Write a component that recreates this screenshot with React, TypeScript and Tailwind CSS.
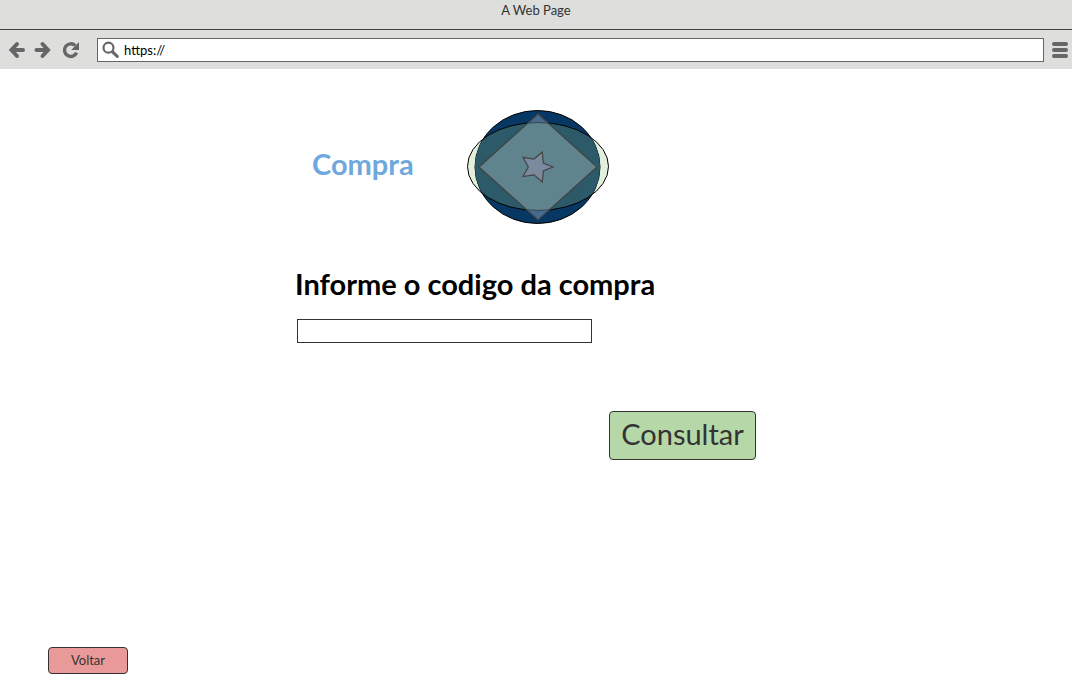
import React from "react";

function BackIcon() {
  return (
    <svg width="18" height="18" viewBox="0 0 18 18" fill="none" stroke="#666666" strokeWidth="4" aria-hidden="true">
      <path d="M9 3 3.5 9 9 15M4 9h11" strokeLinecap="round" strokeLinejoin="miter" />
    </svg>
  );
}

function ForwardIcon() {
  return (
    <svg width="18" height="18" viewBox="0 0 18 18" fill="none" stroke="#666666" strokeWidth="4" aria-hidden="true">
      <path d="M8.5 3 14 9l-5.500 6M13.500 9H2.500" strokeLinecap="round" strokeLinejoin="miter" />
    </svg>
  );
}

function ReloadIcon() {
  return (
    <svg width="18" height="18" viewBox="0 0 18 18" aria-hidden="true">
      <path d="M13.2 4.6A6.3 6.3 0 1 0 14.6 11.6" fill="none" stroke="#666666" strokeWidth="3.4" />
      <path d="M17 1v8H9.2z" fill="#666666" />
    </svg>
  );
}

function SearchIcon() {
  return (
    <svg width="18" height="18" viewBox="0 0 18 18" fill="none" stroke="#666666" aria-hidden="true">
      <circle cx="6.5" cy="6.700" r="5" strokeWidth="2.2" />
      <path d="M10.5 10.800l4.800 4.600" strokeWidth="3" strokeLinecap="round" />
    </svg>
  );
}

function MenuIcon() {
  return (
    <svg width="16" height="16" viewBox="0 0 16 16" fill="#666666" aria-hidden="true">
      <rect width="16" height="4" rx="2" />
      <rect y="6" width="16" height="4" rx="2" />
      <rect y="12" width="16" height="4" rx="2" />
    </svg>
  );
}

const DIAMOND = "73,6 132,59 73,112 14,59";

function Logo() {
  return (
    <svg width="146" height="118" viewBox="0 0 146 118" role="img" aria-label="Logo">
      <defs>
        <clipPath id="round">
          <ellipse cx="72.5" cy="59" rx="62.5" ry="56.5" />
        </clipPath>
        <clipPath id="diamond">
          <polygon points={DIAMOND} />
        </clipPath>
      </defs>
      <ellipse cx="73" cy="58.5" rx="70.5" ry="44" fill="#e2efdc" />
      <ellipse cx="72.5" cy="59" rx="62.5" ry="56.5" fill="#073763" stroke="#000000" />
      <ellipse cx="73" cy="58.5" rx="70.5" ry="44" fill="#2c5a68" clipPath="url(#round)" />
      <ellipse cx="73" cy="58.5" rx="70.5" ry="44" fill="none" stroke="#000000" />
      <g clipPath="url(#diamond)">
        <polygon points={DIAMOND} fill="#486a8e" />
        <ellipse cx="73" cy="58.5" rx="70.5" ry="44" fill="#60848e" stroke="#35474f" />
      </g>
      <polygon points={DIAMOND} fill="none" stroke="#434343" strokeWidth="1.2" />
      <polygon
        points="88,59 78.3,55 77.3,44 69,51 58,49.3 63.3,59 58,68.5 69,66.8 77.3,74 78.3,63"
        fill="#7b8a9c"
        stroke="#434343"
        strokeWidth="1.2"
      />
    </svg>
  );
}

export default function App() {
  return (
    <div className="flex min-h-screen flex-col bg-white font-['Lato',sans-serif] text-[#333333]">
      <header className="bg-[#dededc]">
        <div className="h-[30px] border-b border-[#434343] text-center text-[13px] leading-5">A Web Page</div>
        <div className="flex items-center pt-2 pr-1 pb-[7px] pl-2">
          <button type="button" aria-label="Back"><BackIcon /></button>
          <button type="button" aria-label="Forward" className="ml-2"><ForwardIcon /></button>
          <button type="button" aria-label="Reload" className="ml-2.5"><ReloadIcon /></button>
          <label className="mr-2 ml-[17px] flex h-6 flex-1 items-center gap-1 border border-[#666666] bg-white pl-1 text-[13px]">
            <SearchIcon />
            <input
              type="text"
              aria-label="Address"
              defaultValue="https://"
              className="min-w-0 flex-1 bg-transparent pt-px text-black outline-none"
            />
          </label>
          <button type="button" aria-label="Menu"><MenuIcon /></button>
        </div>
      </header>

      <main className="flex flex-1 flex-col justify-between px-12 pt-[39px] pb-[17px]">
        <form className="mx-auto flex w-full max-w-[482px] flex-col" onSubmit={(e) => e.preventDefault()}>
          <div className="flex items-center pl-[17px]">
            <h1 className="w-[153px] pb-1.5 text-[29px] leading-9 font-bold text-[#6fa8dc]">Compra</h1>
            <Logo />
          </div>
          <label htmlFor="codigo" className="mt-10 text-[29px] leading-9 font-bold whitespace-nowrap text-black">
            Informe o codigo da compra
          </label>
          <input
            id="codigo"
            type="text"
            className="mt-[17px] ml-0.5 h-6 w-[295px] max-w-full border border-[#333333] bg-white px-1 text-[13px] outline-none"
          />
          <button
            type="submit"
            className="mt-[68px] mr-[21px] h-[49px] w-[147px] self-end rounded-[4px] border border-[#333333] bg-[#b6d7a8] pb-1 text-[29px] leading-9"
          >
            Consultar
          </button>
        </form>
        <button
          type="button"
          className="h-[27px] w-20 rounded-[4px] border border-[#333333] bg-[#ea9999] pb-0.5 text-[13px] leading-5"
        >
          Voltar
        </button>
      </main>
    </div>
  );
}
